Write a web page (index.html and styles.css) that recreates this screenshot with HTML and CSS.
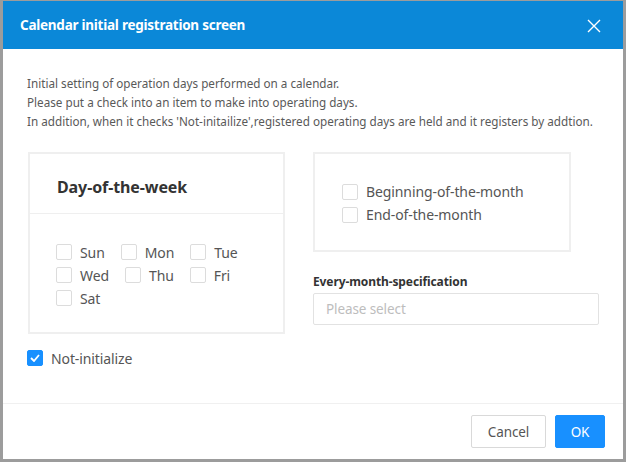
FILE: index.html
```html
<!DOCTYPE html>
<html>
<head>
<meta charset="utf-8">
<link rel="stylesheet" href="styles.css">
</head>
<body>
<div class="dialog">
  <div class="header">
    <div class="title">Calendar initial registration screen</div>
    <svg class="close" width="14" height="14" viewBox="0 0 14 14"><path d="M1 1L13 13M13 1L1 13" stroke="#fff" stroke-width="1.4" fill="none"/></svg>
  </div>
  <div class="body">
    <div class="desc">
      <p>Initial setting of operation days performed on a calendar.</p>
      <p>Please put a check into an item to make into operating days.</p>
      <p>In addition, when it checks 'Not-initailize',registered operating days are held and it registers by addtion.</p>
    </div>
    <div class="columns">
      <div class="card week">
        <div class="card-head">Day-of-the-week</div>
        <div class="card-body">
          <div class="days">
            <label class="cb"><span class="box"></span><span>Sun</span></label>
            <label class="cb"><span class="box"></span><span>Mon</span></label>
            <label class="cb"><span class="box"></span><span>Tue</span></label>
            <label class="cb"><span class="box"></span><span>Wed</span></label>
            <label class="cb"><span class="box"></span><span>Thu</span></label>
            <label class="cb"><span class="box"></span><span>Fri</span></label>
            <label class="cb"><span class="box"></span><span>Sat</span></label>
          </div>
        </div>
      </div>
      <div class="right">
        <div class="card month">
          <label class="cb"><span class="box"></span><span>Beginning-of-the-month</span></label>
          <label class="cb"><span class="box"></span><span>End-of-the-month</span></label>
        </div>
        <div class="field">
          <div class="field-label">Every-month-specification</div>
          <div class="select">Please select</div>
        </div>
      </div>
    </div>
    <label class="cb keep"><span class="box checked"><svg width="10" height="8" viewBox="0 0 10 8"><path d="M1 4L4 7L9 1" stroke="#fff" stroke-width="1.8" fill="none"/></svg></span><span>Not-initialize</span></label>
  </div>
  <div class="footer">
    <button class="btn cancel">Cancel</button>
    <button class="btn ok">OK</button>
  </div>
</div>
</body>
</html>
```
FILE: styles.css
```css
* { box-sizing: border-box; }
html, body { margin: 0; padding: 0; background: #fff; }
body { font-family: "Noto Sans", "Open Sans", sans-serif; color: #555; }
.dialog {
  width: 626px; height: 462px;
  border-style: solid; border-color: #9c9c9c;
  border-width: 1px 3px 3px 3px;
  display: flex; flex-direction: column;
  background: #fff;
}
.header {
  height: 48px; background: #0b88d8;
  display: flex; align-items: center; justify-content: space-between;
  padding: 0 22px 0 17px;
}
.title { color: #fff; font-weight: bold; font-size: 13.5px; letter-spacing: -0.25px; }
.close { display: block; margin-top: 2px; }
.body { flex: 1; padding: 25px 24px 0 24px; }
.desc p { margin: 0; font-size: 11.7px; line-height: 19px; color: #595959; }
.columns { display: flex; gap: 28px; margin-top: 21px; margin-left: 1px; }
.card { border: 2px solid #efefef; }
.week { width: 257px; height: 182px; }
.card-head {
  height: 60px; border-bottom: 1px solid #efefef;
  display: flex; align-items: center; padding-left: 27px;
  font-size: 16px; font-weight: bold; color: #333; letter-spacing: -0.1px;
  padding-top: 6px;
}
.card-body { padding: 30px 0 0 26px; }
.days { width: 196px; display: flex; flex-wrap: wrap; row-gap: 7px; column-gap: 16px; }
.cb { display: inline-flex; align-items: center; gap: 8px; font-size: 14px; color: #555; height: 16px; letter-spacing: -0.1px; }
.box { width: 16px; height: 16px; border: 1px solid #dcdcdc; border-radius: 2px; background: #fff; display: inline-flex; align-items: center; justify-content: center; flex: none; }
.box.checked { background: #1890ff; border-color: #1890ff; }
.right { display: flex; flex-direction: column; }
.month { width: 258px; height: 100px; display: flex; flex-direction: column; justify-content: center; gap: 7px; padding-left: 27px; padding-top: 2px; }
.field { margin-top: 23px; }
.field-label { font-size: 12px; font-weight: bold; color: #333; line-height: 14px; letter-spacing: -0.1px; }
.select {
  margin-top: 4px; width: 286px; height: 32px; border: 1px solid #e2e2e2; border-radius: 2px;
  padding-left: 12px; display: flex; align-items: center; font-size: 13.5px; color: #bdbdbd; letter-spacing: -0.1px;
}
.keep { margin-top: 16px; gap: 8px; }
.footer {
  height: 56px; border-top: 1px solid #f0f0f0;
  display: flex; justify-content: flex-end; align-items: center; gap: 9px;
  padding: 0 18px 0 0;
}
.btn { font-family: inherit; font-size: 13.5px; height: 33px; border-radius: 2px; cursor: pointer; letter-spacing: -0.1px; }
.cancel { width: 75px; background: #fff; border: 1px solid #d9d9d9; color: #555; }
.ok { width: 50px; background: #1890ff; border: 1px solid #1890ff; color: #fff; }
```
